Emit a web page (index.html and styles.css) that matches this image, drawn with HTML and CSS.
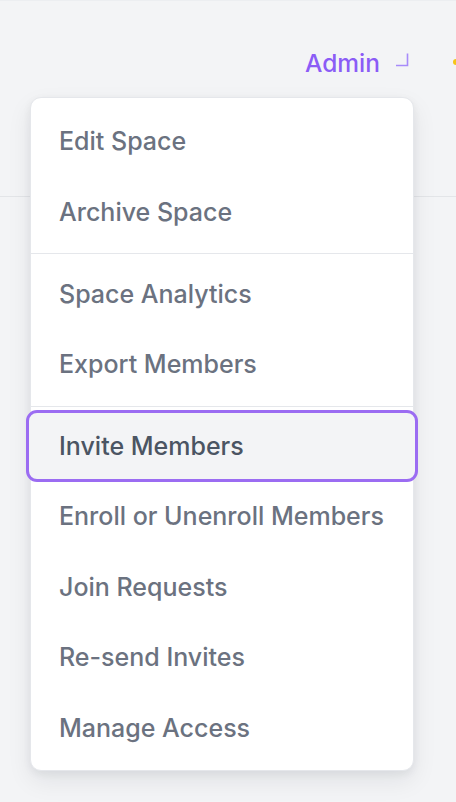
FILE: index.html
```html
<!DOCTYPE html>
<html lang="en">
<head>
<meta charset="utf-8">
<title>Space menu</title>
<link rel="stylesheet" href="styles.css">
</head>
<body>
<header class="header">
  <div class="header-row">
    <button class="admin-btn" type="button">
      <span class="admin-label">Admin</span>
      <svg class="admin-icon" width="14" height="14" viewBox="0 0 14 14" aria-hidden="true"><path d="M1 12.5 H12.5 V0.5" fill="none" stroke="#a78bfa" stroke-width="1.6"/></svg>
    </button>
    <span class="avatar"><span class="avatar-dot"></span></span>
  </div>
</header>
<main class="page"></main>

<div class="menu" role="menu">
  <div class="menu-group">
    <div class="menu-item">Edit Space</div>
    <div class="menu-item">Archive Space</div>
  </div>
  <div class="menu-group group-2">
    <div class="menu-item">Space Analytics</div>
    <div class="menu-item">Export Members</div>
  </div>
  <div class="menu-group group-3">
    <div class="menu-item is-active">Invite Members</div>
    <div class="menu-item">Enroll or Unenroll Members</div>
    <div class="menu-item">Join Requests</div>
    <div class="menu-item">Re-send Invites</div>
    <div class="menu-item">Manage Access</div>
  </div>
</div>
</body>
</html>
```

FILE: styles.css
```css
* { box-sizing: border-box; }

html, body {
  margin: 0;
  padding: 0;
}

body {
  width: 456px;
  height: 802px;
  background: #f3f4f6;
  font-family: Inter, "Noto Sans", sans-serif;
  overflow: hidden;
  position: relative;
  border-top: 1px solid #eceef1;
}

.header {
  height: 196px;
  border-bottom: 1px solid #e3e5e8;
}

.header-row {
  height: 123px;
  display: flex;
  align-items: center;
  justify-content: flex-end;
  padding-right: 47px;
  position: relative;
}

.admin-btn {
  display: flex;
  align-items: center;
  gap: 15px;
  background: none;
  border: 0;
  padding: 0;
  font: inherit;
  cursor: pointer;
}

.admin-label {
  font-size: 24.5px;
  font-weight: 500;
  color: #8b5cf6;
  line-height: 30px;
}

.admin-icon {
  display: block;
  margin-top: -6px;
}

.avatar {
  position: absolute;
  right: 0;
  top: 28px;
  width: 18px;
  height: 68px;
  background: radial-gradient(circle at 52px 34px, #eff1f3 0, #eff1f3 33px, rgba(239,241,243,0) 34.5px);
}

.avatar-dot {
  position: absolute;
  right: 0;
  top: 30px;
  width: 3px;
  height: 6px;
  border-radius: 3px 0 0 3px;
  background: #f5c518;
}

.menu {
  position: absolute;
  top: 96px;
  left: 30px;
  width: 384px;
  background: #ffffff;
  border: 1px solid #e5e7eb;
  border-radius: 11px;
  box-shadow: 0 10px 24px rgba(17, 24, 39, 0.08), 0 3px 8px rgba(17, 24, 39, 0.06);
}

.menu-group {
  padding: 8px 0 6px;
}

.menu-group + .menu-group {
  border-top: 1px solid #e5e7eb;
}

.group-2 {
  padding: 4.5px 0 6px;
}

.group-3 {
  padding: 4px 0 6.5px;
}

.menu-item {
  height: 70.5px;
  display: flex;
  align-items: center;
  padding: 0 27px 0 28px;
  font-size: 25px;
  font-weight: 500;
  color: #6b7280;
  white-space: nowrap;
}

.menu-item.is-active {
  height: 72.5px;
  margin: -1px -5px;
  padding-left: 30px;
  background: #f3f4f6;
  color: #4b5563;
  border: 3px solid #9b6cf2;
  border-radius: 11px;
}
```
